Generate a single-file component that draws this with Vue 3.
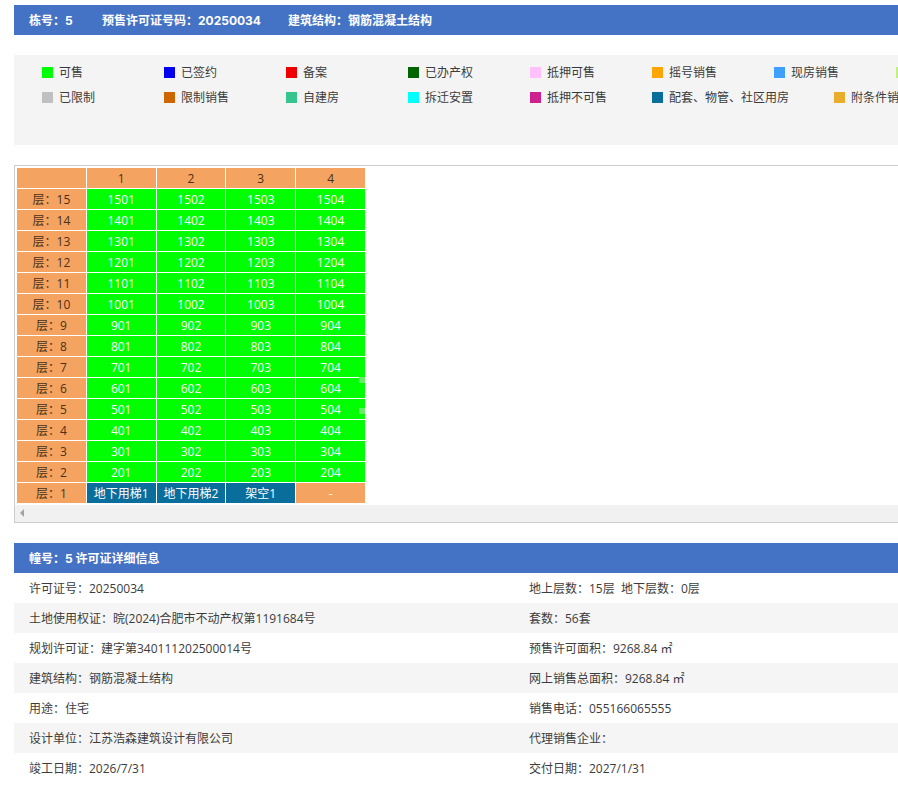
<script setup>
const legendRows = [
  [
    { name: "可售", color: "#00ff00" },
    { name: "已签约", color: "#0000ee" },
    { name: "备案", color: "#ee0000" },
    { name: "已办产权", color: "#006400" },
    { name: "抵押可售", color: "#ffc0fb" },
    { name: "摇号销售", color: "#ffa500" },
    { name: "现房销售", color: "#40a0ff" },
    { name: "", color: "#c0f080" }
  ],
  [
    { name: "已限制", color: "#c0c0c0" },
    { name: "限制销售", color: "#cd6600" },
    { name: "自建房", color: "#35c690" },
    { name: "拆迁安置", color: "#00ffff" },
    { name: "抵押不可售", color: "#cd1f90" },
    { name: "配套、物管、社区用房", color: "#0a6e9c" },
    { name: "附条件销售", color: "#e9ad2b" }
  ]
];

const columns = [1, 2, 3, 4];
const floors = [15, 14, 13, 12, 11, 10, 9, 8, 7, 6, 5, 4, 3, 2];

const details = [
  ["许可证号：20250034", "地上层数：15层  地下层数：0层"],
  ["土地使用权证：晥(2024)合肥市不动产权第1191684号", "套数：56套"],
  ["规划许可证：建字第340111202500014号", "预售许可面积：9268.84 ㎡"],
  ["建筑结构：钢筋混凝土结构", "网上销售总面积：9268.84 ㎡"],
  ["用途：住宅", "销售电话：055166065555"],
  ["设计单位：江苏浩森建筑设计有限公司", "代理销售企业："],
  ["竣工日期：2026/7/31", "交付日期：2027/1/31"]
];
</script>

<template>
  <div class="page">
    <div class="title-bar">
      <span class="t1">栋号：5</span>
      <span class="t2">预售许可证号码：20250034</span>
      <span>建筑结构：钢筋混凝土结构</span>
    </div>

    <div class="legend">
      <div class="legend-row" v-for="(row, i) in legendRows" :key="i">
        <div class="legend-item" v-for="item in row" :key="item.color">
          <i class="swatch" :style="{ background: item.color }"></i>
          <span>{{ item.name }}</span>
        </div>
      </div>
    </div>

    <div class="table-box">
      <div class="table-wrap">
        <table class="house-table">
          <tbody>
            <tr>
              <td class="head"></td>
              <td class="head" v-for="c in columns" :key="c">{{ c }}</td>
            </tr>
            <tr v-for="f in floors" :key="f">
              <td class="head">层：{{ f }}</td>
              <td class="sale" v-for="c in columns" :key="c">{{ f * 100 + c }}</td>
            </tr>
            <tr>
              <td class="head">层：1</td>
              <td class="other">地下用梯1</td>
              <td class="other">地下用梯2</td>
              <td class="other">架空1</td>
              <td class="empty">-</td>
            </tr>
          </tbody>
        </table>
        <i class="mark mark-a"></i>
        <i class="mark mark-b"></i>
      </div>
      <div class="scrollbar"><i class="arrow"></i></div>
    </div>

    <div class="title-bar detail-title">幢号：5 许可证详细信息</div>
    <div class="details">
      <div class="detail-row" v-for="(row, i) in details" :key="i">
        <div class="detail-cell">{{ row[0] }}</div>
        <div class="detail-cell">{{ row[1] }}</div>
      </div>
    </div>
  </div>
</template>

<style>
html, body {
  overflow: hidden;
  background: #fff;
}
</style>

<style scoped>
.page {
  width: 1000px;
  margin-left: 14px;
  padding-top: 5px;
  font-family: "Open Sans", "Noto Sans CJK SC", sans-serif;
  font-size: 12px;
  color: #3c3c3c;
}

.title-bar {
  height: 30px;
  line-height: 31px;
  padding-left: 15px;
  background: #4472c4;
  color: #fff;
  font-family: Inter, "Noto Sans CJK SC", sans-serif;
  font-weight: bold;
  white-space: pre;
}

.t1 {
  display: inline-block;
  width: 73px;
}

.t2 {
  display: inline-block;
  width: 186px;
}

.legend {
  height: 90px;
  margin-top: 20px;
  padding: 5px 0 0 28px;
  box-sizing: border-box;
  background: #f4f4f4;
}

.legend-row {
  display: flex;
  gap: 45px;
  height: 25px;
  line-height: 24px;
  white-space: nowrap;
}

.legend-item {
  display: flex;
  align-items: center;
  min-width: 77px;
}

.swatch {
  width: 11px;
  height: 11px;
  margin-right: 6px;
}

.table-box {
  margin-top: 20px;
  border: 1px solid #ccc;
  border-right: 0;
  height: 358px;
  box-sizing: border-box;
}

.table-wrap {
  position: relative;
  height: 339px;
  padding: 1px 0 0 1px;
  box-sizing: border-box;
}

.house-table {
  border-collapse: separate;
  border-spacing: 1px;
  table-layout: fixed;
  width: 350px;
  text-align: center;
  color: #fff;
}

.house-table td {
  height: 20px;
  padding: 2px 0 0;
  box-sizing: border-box;
  line-height: 18px;
  white-space: nowrap;
}

.house-table td.head {
  background: #f4a460;
  color: #4a3018;
}

.house-table td.sale {
  background: #00ff00;
}

.house-table td.other {
  background: #0a6e9c;
}

.house-table td.empty {
  background: #f4a460;
}

.mark {
  position: absolute;
  left: 344px;
  width: 6px;
  background: #66ee66;
}

.mark-a {
  top: 211px;
  height: 6px;
}

.mark-b {
  top: 242px;
  height: 6px;
}

.scrollbar {
  height: 17px;
  background: #f1f1f1;
  position: relative;
}

.arrow {
  position: absolute;
  left: 5px;
  top: 4px;
  border-style: solid;
  border-width: 4px 4px 4px 0;
  border-color: transparent #a3a3a3 transparent transparent;
}

.detail-title {
  margin-top: 20px;
}

.detail-row {
  display: flex;
  height: 30px;
  line-height: 31px;
}

.detail-row:nth-child(even) {
  background: #f5f5f5;
}

.detail-cell {
  width: 500px;
  padding-left: 15px;
  box-sizing: border-box;
  white-space: pre;
}
</style>
